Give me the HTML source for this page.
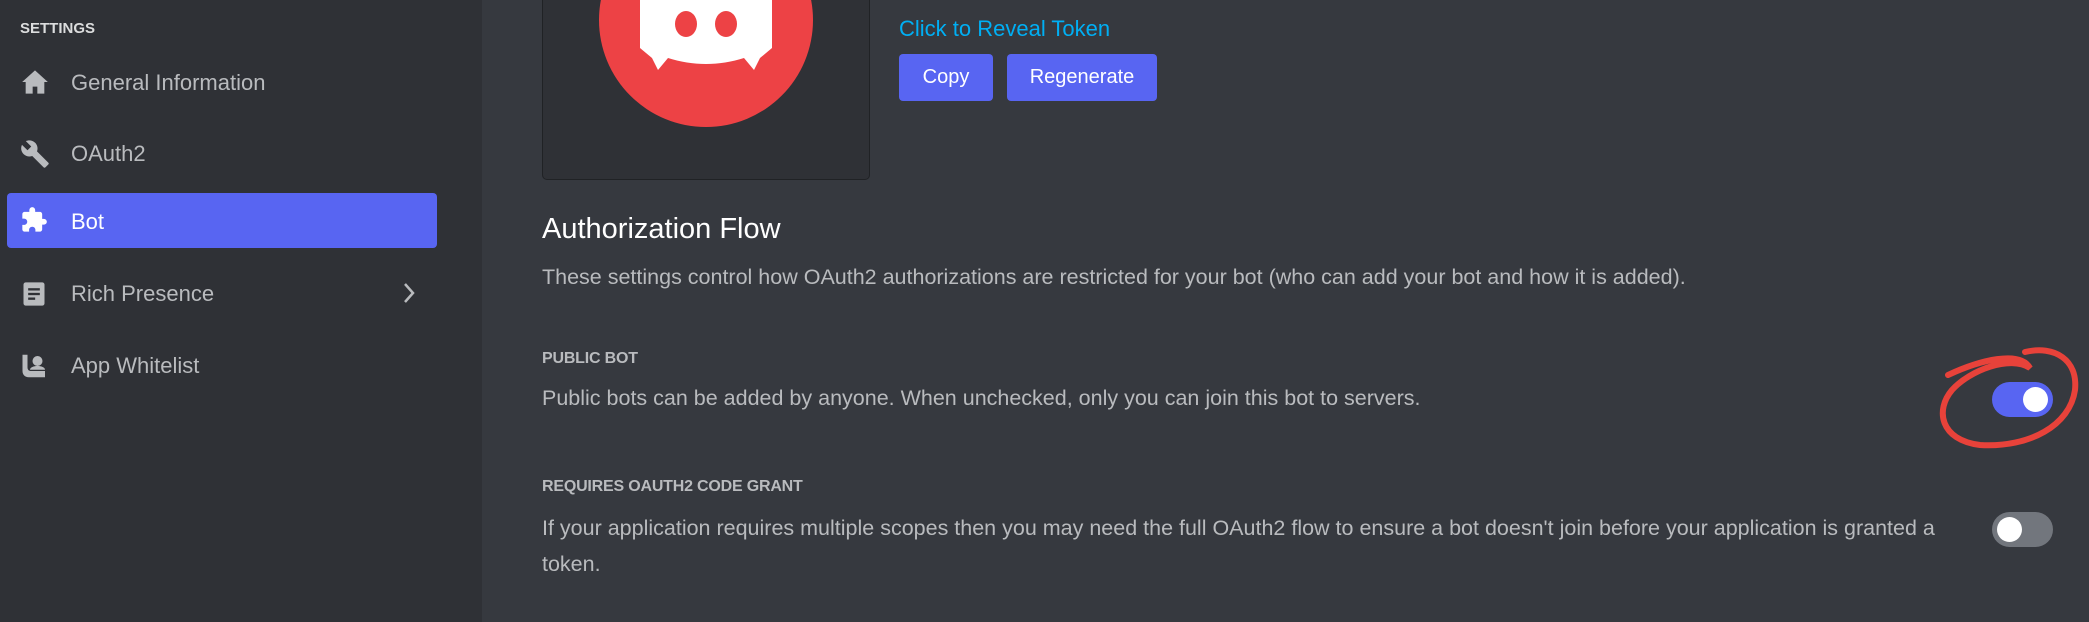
<!DOCTYPE html>
<html><head><meta charset="utf-8"><style>
*{margin:0;padding:0;box-sizing:border-box}
body{width:2089px;height:622px;overflow:hidden;background:#36393f;font-family:"Liberation Sans",sans-serif;position:relative}
.side{position:absolute;left:0;top:0;width:482px;height:622px;background:#2f3136}
.abs{position:absolute;white-space:nowrap}
.nav{position:absolute;left:0;width:437px;height:55px;color:#b9bbbe;font-size:22px}
.nav span{position:absolute;left:71px;top:16px}
.nav svg{position:absolute;left:20px;top:14px}
.btn{position:absolute;background:#5865f2;border-radius:4px;color:#fff;font-size:20px;text-align:center;line-height:47px;top:54px;height:47px}
.hdr{font-size:16px;font-weight:bold;color:#b9bbbe;letter-spacing:-0.2px}
.desc{font-size:21.5px;color:#b9bbbe}
.tog{position:absolute;width:61px;height:35px;border-radius:18px}
.knob{position:absolute;top:5px;width:25px;height:25px;border-radius:50%;background:#fff}
</style></head><body>
<div class="side">
<div class="abs" style="left:20px;top:20px;font-size:15px;font-weight:bold;color:#dcddde">SETTINGS</div>
<div class="nav" style="top:54px"><svg width="30" height="28" viewBox="0 0 24 24"><path fill="#b9bbbe" d="M12 2 1 12h3v10h6v-6h4v6h6V12h3z"/></svg><span>General Information</span></div>
<div class="nav" style="top:125px"><svg width="30" height="30" viewBox="0 0 24 24"><path fill="#b9bbbe" d="M22.7 19 13.6 9.9c.9-2.3.4-5-1.5-6.9-2-2-5-2.4-7.4-1.3L9 6 6 9 1.6 4.7C.4 7.1.9 10.1 2.9 12.1c1.9 1.9 4.6 2.4 6.9 1.5l9.1 9.1c.4.4 1 .4 1.4 0l2.3-2.3c.5-.4.5-1.1.1-1.4z"/></svg><span>OAuth2</span></div>
<div class="nav" style="top:193px;left:7px;width:430px;background:#5865f2;border-radius:4px;color:#fff"><svg width="28" height="32" viewBox="0 0 24 24" style="left:13px;top:11px"><path fill="#fff" d="M20.5 11H19V7c0-1.1-.9-2-2-2h-4V3.5a2.5 2.5 0 0 0-5 0V5H4c-1.1 0-2 .9-2 2v3.8h1.5c1.5 0 2.7 1.2 2.7 2.7S5 16.2 3.5 16.2H2V20c0 1.1.9 2 2 2h3.8v-1.5c0-1.5 1.2-2.7 2.7-2.7s2.7 1.2 2.7 2.7V22H17c1.1 0 2-.9 2-2v-4h1.5a2.5 2.5 0 0 0 0-5z"/></svg><span style="left:64px">Bot</span></div>
<div class="nav" style="top:265px"><svg width="28" height="30" viewBox="0 0 24 24"><rect x="3" y="2" width="18" height="20" rx="2" fill="#b9bbbe"/><rect x="7" y="7" width="10" height="2" fill="#2f3136"/><rect x="7" y="11" width="10" height="2" fill="#2f3136"/><rect x="7" y="15" width="6" height="2" fill="#2f3136"/></svg><span>Rich Presence</span><svg width="14" height="22" viewBox="0 0 14 22" style="left:402px;top:17px"><path d="M3 2l8 9-8 9" stroke="#b9bbbe" stroke-width="2.5" fill="none"/></svg></div>
<div class="nav" style="top:337px"><svg width="30" height="30" viewBox="0 0 24 24"><path fill="#b9bbbe" d="M2 3h4v10c0 2 1 3 3 3h11v5H7c-3 0-5-2-5-5z"/><circle cx="14" cy="8" r="4" fill="#b9bbbe"/><path fill="#b9bbbe" d="M8 15c0-2 3-3 6-3s6 1 6 3z"/></svg><span>App Whitelist</span></div>
</div>
<div class="abs" style="left:542px;top:-10px;width:328px;height:190px;background:#2f3136;border:1px solid #202225;border-radius:0 0 5px 5px"></div>
<div class="abs" style="left:599px;top:-87px;width:214px;height:214px;border-radius:50%;background:#ed4245"></div>
<svg class="abs" style="left:640px;top:-10px" width="132" height="85" viewBox="0 0 132 85"><path fill="#fff" d="M0 0h132v58l-12 10-6 12-10-12c-25 8-51 8-76 0L18 80l-6-12L0 58z"/><ellipse cx="46" cy="34" rx="11" ry="13" fill="#ed4245"/><ellipse cx="86" cy="34" rx="11" ry="13" fill="#ed4245"/></svg>
<div class="abs" style="left:899px;top:16px;font-size:22px;color:#00aff4">Click to Reveal Token</div>
<div class="btn" style="left:899px;width:94px">Copy</div>
<div class="btn" style="left:1007px;width:150px">Regenerate</div>
<div class="abs" style="left:542px;top:213px;font-size:29px;color:#fff">Authorization Flow</div>
<div class="abs desc" style="left:542px;top:265px">These settings control how OAuth2 authorizations are restricted for your bot (who can add your bot and how it is added).</div>
<div class="abs hdr" style="left:542px;top:350px">PUBLIC BOT</div>
<div class="abs desc" style="left:542px;top:386px">Public bots can be added by anyone. When unchecked, only you can join this bot to servers.</div>
<div class="abs hdr" style="left:542px;top:478px">REQUIRES OAUTH2 CODE GRANT</div>
<div class="abs desc" style="left:542px;top:510px;line-height:36px">If your application requires multiple scopes then you may need the full OAuth2 flow to ensure a bot doesn't join before your application is granted a<br>token.</div>
<div class="tog" style="left:1992px;top:382px;background:#5865f2"><div class="knob" style="left:31px"></div></div>
<div class="tog" style="left:1992px;top:512px;background:#72767d"><div class="knob" style="left:5px"></div></div>
<svg class="abs" style="left:1930px;top:330px" width="159" height="130" viewBox="0 0 159 130"><path d="M18 45C50 30 90 20 100 38C80 25 40 40 22 60C5 80 10 110 50 115C100 118 140 95 145 60C148 30 125 15 95 22" stroke="#e8423a" stroke-width="6" fill="none" stroke-linecap="round"/></svg>
</body></html>
